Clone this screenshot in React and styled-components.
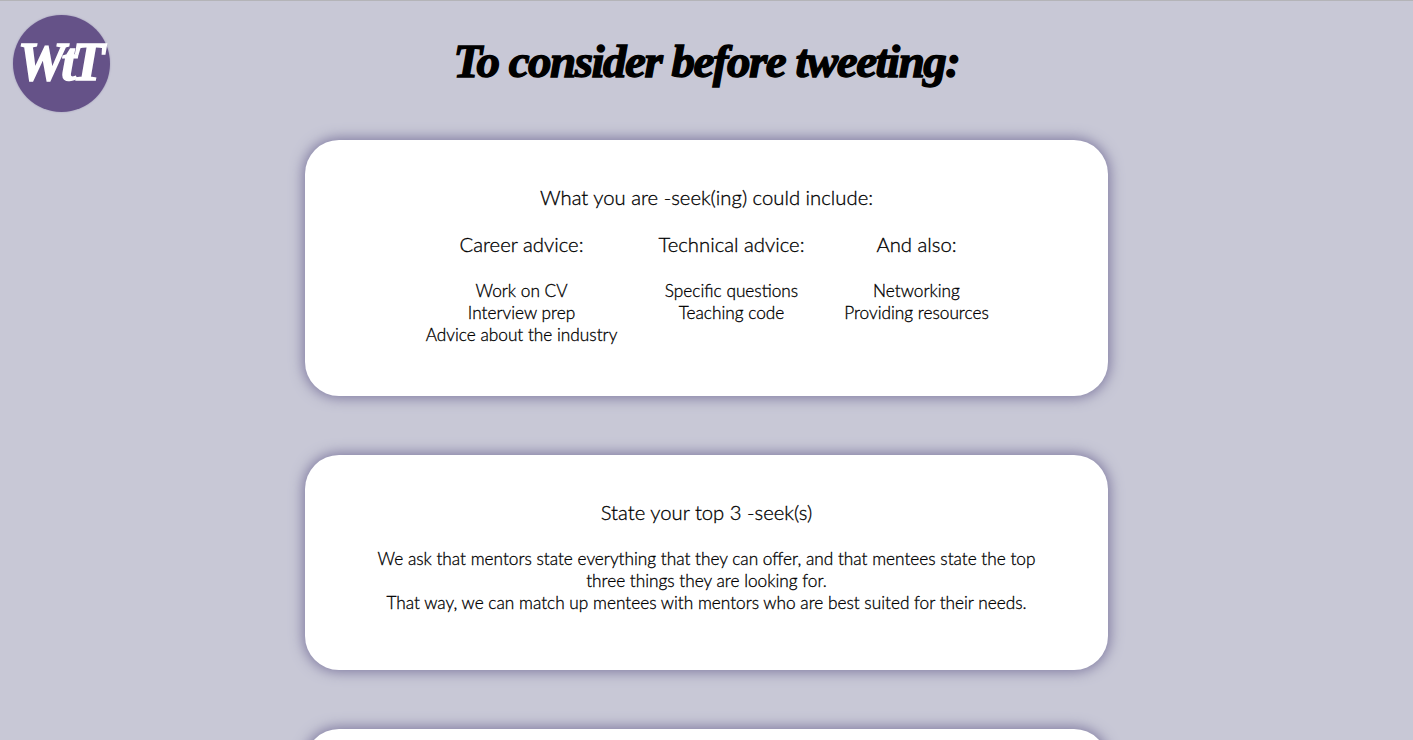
import React from "react";
import styled, { createGlobalStyle } from "styled-components";

const Global = createGlobalStyle`
  html, body { margin: 0; padding: 0; height: 100%; overflow: hidden; background: #c8c8d6; }
  body { font-family: "Lato", "Liberation Sans", sans-serif; color: #000; -webkit-text-stroke: 0.3px #000; }
`;

const Page = styled.div`
  height: 740px;
  overflow: hidden;
  border-top: 1px solid #b4b4b8;
  box-sizing: border-box;
  position: relative;
`;

const Logo = styled.div`
  position: absolute;
  left: 13px;
  top: 14px;
  width: 97px;
  height: 97px;
  border-radius: 50%;
  background: #655288;
  box-shadow: 0 0 2px #9a93b4;
  display: flex;
  align-items: center;
  justify-content: center;
  color: #fff;
  font: italic 700 54px/1 "Liberation Serif", serif;
  letter-spacing: -4.5px;
  -webkit-text-stroke: 1.5px #fff;
  padding-right: 5px;
  padding-bottom: 3px;
  box-sizing: border-box;
`;

const Title = styled.h1`
  margin: 0;
  padding-top: 34px;
  height: 139px;
  box-sizing: border-box;
  text-align: center;
  white-space: nowrap;
  font: italic 700 47px/52px "Liberation Serif", serif;
  letter-spacing: -1.5px;
  -webkit-text-stroke: 1.4px #000;
`;

const Stack = styled.div`
  display: flex;
  flex-direction: column;
  align-items: center;
  gap: 59px;
`;

const Card = styled.section`
  width: 803px;
  height: ${(p) => p.$h}px;
  flex: none;
  box-sizing: border-box;
  padding-top: 43px;
  background: #fff;
  border-radius: 34px;
  box-shadow: 0 0 13px 2px #7f7aa0;
  text-align: center;
`;

const Heading = styled.h2`
  margin: 0;
  font-weight: 300;
  font-size: 20.3px;
  line-height: 28px;
`;

const Columns = styled.div`
  display: grid;
  grid-template-columns: 191px 147px 141px;
  column-gap: 41px;
  justify-content: center;
  justify-items: center;
  margin-top: 19px;
  white-space: nowrap;
`;

const Column = styled.div``;

const ColumnHead = styled.h3`
  margin: 0 0 22px;
  font-weight: 300;
  font-size: 20.3px;
  line-height: 28px;
`;

const Lines = styled.p`
  margin: 0;
  font-weight: 300;
  font-size: 17.25px;
  line-height: 22px;
`;

const Body = styled.p`
  margin: 22px auto 0;
  width: 680px;
  font-weight: 300;
  font-size: 17.25px;
  line-height: 22px;
`;

const columns = [
  { head: "Career advice:", lines: ["Work on CV", "Interview prep", "Advice about the industry"] },
  { head: "Technical advice:", lines: ["Specific questions", "Teaching code"] },
  { head: "And also:", lines: ["Networking", "Providing resources"] },
];

export default function App() {
  return (
    <Page>
      <Global />
      <Logo>WtT</Logo>
      <Title>To consider before tweeting:</Title>
      <Stack>
        <Card $h={256}>
          <Heading>What you are -seek(ing) could include:</Heading>
          <Columns>
            {columns.map((c) => (
              <Column key={c.head}>
                <ColumnHead>{c.head}</ColumnHead>
                <Lines>
                  {c.lines.map((l) => (
                    <React.Fragment key={l}>
                      {l}
                      <br />
                    </React.Fragment>
                  ))}
                </Lines>
              </Column>
            ))}
          </Columns>
        </Card>
        <Card $h={215}>
          <Heading>State your top 3 -seek(s)</Heading>
          <Body>
            We ask that mentors state everything that they can offer, and that mentees state the top three things they are looking for.
            <br />
            That way, we can match up mentees with mentors who are best suited for their needs.
          </Body>
        </Card>
        <Card $h={215} />
      </Stack>
    </Page>
  );
}
